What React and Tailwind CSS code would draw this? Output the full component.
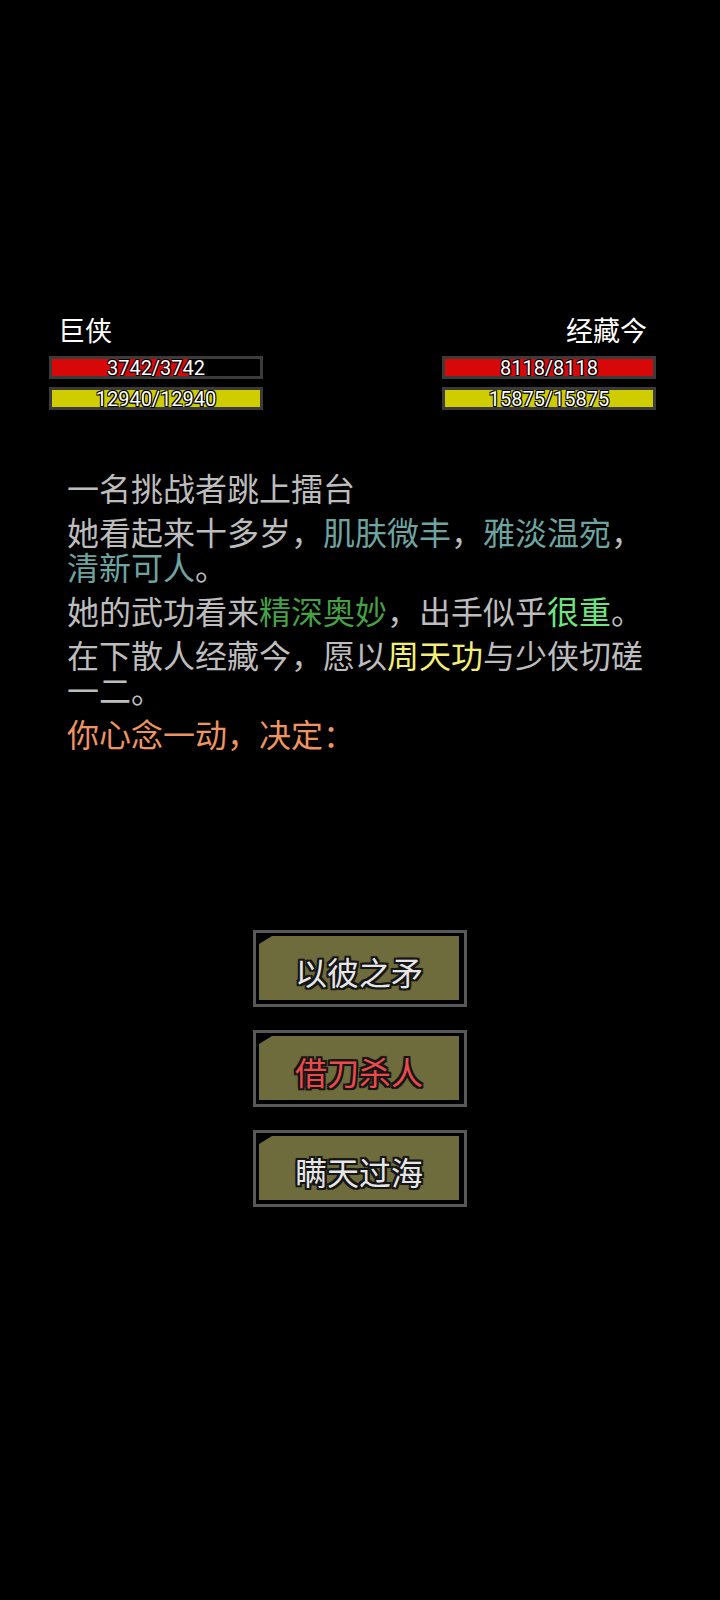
import React from "react";

const FONT = "[font-family:'Noto_Sans_CJK_SC','Noto_Sans',sans-serif]";

const fighters = [
  { name: "巨侠", hp: "3742/3742", hpPct: 66, mp: "12940/12940", align: "left" },
  { name: "经藏今", hp: "8118/8118", hpPct: 100, mp: "15875/15875", align: "right" },
];

const Bar = ({ pct, color, label }) => (
  <div className="relative h-[23px] w-full border-[3px] border-[#3b3b3b] bg-black">
    <div className={`h-full ${color}`} style={{ width: `${pct}%` }} />
    <div className="absolute inset-0 flex items-center justify-center text-[20px] leading-none text-white [font-family:Roboto,'Liberation_Sans',sans-serif] [text-shadow:-1px_-1px_0_#000,1px_-1px_0_#000,-1px_1px_0_#000,1px_1px_0_#000,0_1px_1px_#000]">
      {label}
    </div>
  </div>
);

const Fighter = ({ f }) => (
  <div className="flex w-[214px] flex-col">
    <div
      className={`px-[9px] text-[27px] leading-[32px] text-white ${
        f.align === "right" ? "text-right" : "text-left"
      }`}
    >
      {f.name}
    </div>
    <div className="mt-[10px] flex flex-col gap-[8px]">
      <Bar pct={f.hpPct} color="bg-[#d80808]" label={f.hp} />
      <Bar pct={100} color="bg-[#cfcc00]" label={f.mp} />
    </div>
  </div>
);

const ChoiceButton = ({ children, red }) => (
  <button className="h-[77px] w-[214px] border-[3px] border-[#585858] bg-black pt-[3px] pl-[3px] pr-[5px] pb-[4px]">
    <div
      className={`flex h-full w-full items-center justify-center bg-[#6e6b3c] pt-[5px] text-[32px] leading-none [clip-path:polygon(13px_0,100%_0,100%_100%,0_100%,0_8px)] [text-shadow:-2px_-2px_0_#151515,2px_-2px_0_#151515,-2px_2px_0_#151515,2px_2px_0_#151515,0_2px_0_#151515,0_-2px_0_#151515,2px_0_0_#151515,-2px_0_0_#151515,0_0_3px_#151515] ${
        red ? "text-[#ec4a4a]" : "text-[#e6e6e6]"
      }`}
    >
      {children}
    </div>
  </button>
);

export default function App() {
  return (
    <div className={`min-h-[1600px] w-[720px] bg-black ${FONT}`}>
      <div className="flex justify-between pt-[314px] pl-[49px] pr-[64px]">
        {fighters.map((f) => (
          <Fighter key={f.name} f={f} />
        ))}
      </div>

      <div className="mt-[60px] flex flex-col gap-[9px] px-[67px] text-[32px] leading-[35px] text-[#bdbdbd]">
        <p>一名挑战者跳上擂台</p>
        <p>
          她看起来十多岁，<span className="text-[#6ea4a0]">肌肤微丰</span>，
          <span className="text-[#6ea4a0]">雅淡温宛</span>，
          <span className="text-[#6ea4a0]">清新可人</span>。
        </p>
        <p>
          她的武功看来<span className="text-[#46a046]">精深奥妙</span>，出手似乎
          <span className="text-[#6ee47e]">很重</span>。
        </p>
        <p>
          在下散人经藏今，愿以<span className="text-[#f2ef78]">周天功</span>与少侠切磋一二。
        </p>
        <p className="text-[#ee9460]">你心念一动，决定：</p>
      </div>

      <div className="mt-[179px] flex flex-col items-center gap-[23px]">
        <ChoiceButton>以彼之矛</ChoiceButton>
        <ChoiceButton red>借刀杀人</ChoiceButton>
        <ChoiceButton>瞒天过海</ChoiceButton>
      </div>
    </div>
  );
}
